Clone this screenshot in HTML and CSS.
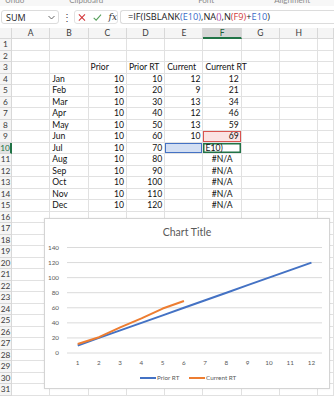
FILE: index.html
```html
<!DOCTYPE html>
<html lang="en">

<head>
    <meta charset="utf-8">
    <meta name="viewport" content="width=device-width, initial-scale=1.0">
    <title>Sheet1</title>
    <link rel="stylesheet" href="styles.css">
</head>

<body>

    <div class="ribbon">
        <span class="rb rb1">Undo</span>
        <span class="rb rb2">Clipboard</span>
        <span class="rb rb3">Font</span>
        <span class="rb rb4">Alignment</span>
    </div>

    <div class="fbar">
        <div class="namebox">
            <span>SUM</span>
            <svg class="chev" width="7" height="5" viewBox="0 0 7 5"><path d="M0.5 1 L3.5 4 L6.5 1" fill="none" stroke="#555" stroke-width="0.9"/></svg>
        </div>
        <div class="dots">⋮</div>
        <div class="btns">
            <svg width="9" height="9" viewBox="0 0 9 9"><path d="M1 1 L8 8 M8 1 L1 8" stroke="#d13438" stroke-width="1.2" fill="none"/></svg>
            <svg width="10" height="9" viewBox="0 0 10 9"><path d="M0.8 4.8 L3.6 7.6 L9.2 1.2" stroke="#55a05a" stroke-width="1.2" fill="none"/></svg>
            <span class="fx">fx</span>
        </div>
        <div class="formula">=IF(ISBLANK<span class="p1">(</span><span class="r1">E10</span><span class="p1">)</span>,NA<span class="p2">()</span>,N<span class="p3">(</span><span class="r2">F9</span><span class="p3">)</span>+<span class="r1">E10</span>)</div>
    </div>

    <div class="sheet"></div>

    <div class="chart">
        <svg width="286" height="171" viewBox="0 0 286 171">
            <rect x="0.5" y="0.5" width="285" height="170" fill="#fff" stroke="#d4d4d4"/>
            <text class="title" x="143" y="18" text-anchor="middle">Chart Title</text>
            <g class="grid"></g>
            <g class="labels"></g>
            <polyline class="prior" fill="none" stroke="#4472c4" stroke-width="2" stroke-linejoin="round" points=""/>
            <polyline class="current" fill="none" stroke="#ed7d31" stroke-width="2" stroke-linejoin="round" points=""/>
            <line x1="96" y1="160" x2="112" y2="160" stroke="#4472c4" stroke-width="2"/>
            <text class="lbl" x="113" y="162.3">Prior RT</text>
            <line x1="145" y1="160" x2="161" y2="160" stroke="#ed7d31" stroke-width="2"/>
            <text class="lbl" x="162" y="162.3">Current RT</text>
        </svg>
    </div>

    <script>
        let sheet = document.querySelector(".sheet");
        let cols = ["A", "B", "C", "D", "E", "F", "G", "H", ""];
        let months = ["Jan", "Feb", "Mar", "Apr", "May", "Jun", "Jul", "Aug", "Sep", "Oct", "Nov", "Dec"];
        let current = [12, 9, 13, 12, 13, 10];
        let currentRT = [12, 21, 34, 46, 59, 69];

        function cell(text, cls) {
            let c = document.createElement("div");
            c.className = "cell " + cls;
            c.textContent = text;
            sheet.appendChild(c);
        }

        // kolonne-overskrifter
        cell("", "corner");
        cols.forEach(c => cell(c, c == "F" ? "colhead sel" : "colhead"));

        for (let r = 1; r <= 31; r++) {
            cell(r, r == 10 ? "rowhead sel" : "rowhead");
            cols.forEach(c => {
                let text = "";
                let cls = "num";
                let i = r - 4;
                if (r == 3 && c == "C") { text = "Prior"; cls = "txt"; }
                if (r == 3 && c == "D") { text = "Prior RT"; cls = "txt"; }
                if (r == 3 && c == "E") { text = "Current"; cls = "txt"; }
                if (r == 3 && c == "F") { text = "Current RT"; cls = "txt"; }
                if (i >= 0 && i < 12) {
                    if (c == "B") { text = months[i]; cls = "txt"; }
                    if (c == "C") text = 10;
                    if (c == "D") text = (i + 1) * 10;
                    if (c == "E" && i < 6) text = current[i];
                    if (c == "F") {
                        if (i < 6) text = currentRT[i];
                        else if (i == 6) { text = "E10)"; cls = "txt"; }
                        else { text = "#N/A"; cls = "na"; }
                    }
                }
                if (r == 10 && c == "E") cls += " refblue";
                if (r == 9 && c == "F") cls += " refred";
                if (r == 10 && c == "F") cls += " active";
                cell(text, cls);
            });
        }

        // diagram
        let zero = 135;
        let scale = 105.5 / 140;
        let xpos = i => 33.7 + (i - 1) * 21.25;
        let ns = "http://www.w3.org/2000/svg";
        let grid = document.querySelector(".grid");
        let labels = document.querySelector(".labels");

        for (let v = 0; v <= 140; v += 20) {
            let y = zero - v * scale;
            let l = document.createElementNS(ns, "line");
            l.setAttribute("x1", 23);
            l.setAttribute("x2", 278);
            l.setAttribute("y1", y);
            l.setAttribute("y2", y);
            grid.appendChild(l);
            let t = document.createElementNS(ns, "text");
            t.setAttribute("x", 15);
            t.setAttribute("y", y + 2.2);
            t.setAttribute("text-anchor", "end");
            t.setAttribute("class", "lbl");
            t.textContent = v;
            labels.appendChild(t);
        }
        for (let i = 1; i <= 12; i++) {
            let t = document.createElementNS(ns, "text");
            t.setAttribute("x", xpos(i));
            t.setAttribute("y", 146.6);
            t.setAttribute("text-anchor", "middle");
            t.setAttribute("class", "lbl");
            t.textContent = i;
            labels.appendChild(t);
        }

        let prior = [];
        for (let i = 1; i <= 12; i++) prior.push(xpos(i) + "," + (zero - i * 10 * scale));
        document.querySelector(".prior").setAttribute("points", prior.join(" "));
        let cur = currentRT.map((v, i) => xpos(i + 1) + "," + (zero - v * scale));
        document.querySelector(".current").setAttribute("points", cur.join(" "));
    </script>

</body>

</html>
```

FILE: styles.css
```css
body {
    margin: 0;
    width: 334px;
    height: 397px;
    overflow: hidden;
    position: relative;
    background-color: #fff;
    font-family: 'Lato', 'Noto Sans', sans-serif;
}

/* rest af ribbon i toppen */
.ribbon {
    height: 6px;
    overflow: hidden;
    display: flex;
    font-size: 8px;
    line-height: 8px;
    color: #8a8a8a;
    background-color: #f7f7f7;
}

.rb {
    margin-top: -4px;
}

.rb1 {
    margin-left: 5px;
}

.rb2 {
    margin-left: 45px;
}

.rb3 {
    margin-left: 95px;
}

.rb4 {
    margin-left: 60px;
}

.fbar {
    display: flex;
    align-items: center;
    height: 16px;
    margin-top: 3px;
}

.namebox {
    display: flex;
    align-items: center;
    justify-content: space-between;
    width: 58px;
    height: 14px;
    margin-left: 1px;
    padding: 0 3px 0 4px;
    box-sizing: border-box;
    border: 1px solid #dcdcdc;
    border-radius: 3px;
    font-family: 'Open Sans', sans-serif;
    font-size: 9px;
    color: #222;
}

.dots {
    width: 15px;
    text-align: center;
    font-size: 10px;
    color: #444;
}

.btns {
    display: flex;
    align-items: center;
    gap: 7px;
    width: 44px;
    height: 14px;
    padding-left: 3px;
    box-sizing: border-box;
    border: 1px solid #e2e2e2;
    border-radius: 3px;
}

.fx {
    font-family: 'DejaVu Serif', serif;
    font-style: italic;
    font-size: 9px;
    color: #333;
}

.formula {
    flex: 1;
    height: 14px;
    margin-left: 2px;
    padding-left: 7px;
    box-sizing: border-box;
    border: 1px solid #dcdcdc;
    border-right: none;
    border-radius: 3px 0 0 3px;
    font-family: 'Open Sans', sans-serif;
    font-size: 9.2px;
    line-height: 12px;
    color: #222;
    white-space: nowrap;
}

.r1 {
    color: #3a6bc8;
}

.r2 {
    color: #d23c3c;
}

.p1 {
    color: #3a6bc8;
}

.p2 {
    color: #a0379a;
}

.p3 {
    color: #d23c3c;
}

/* regneark */
.sheet {
    display: grid;
    grid-template-columns: 12px repeat(8, 38.3px) 1fr;
    grid-template-rows: 11px;
    grid-auto-rows: 11.5px;
    margin-top: 3px;
    font-size: 8.6px;
}

.cell {
    position: relative;
    box-sizing: border-box;
    border-right: 1px solid #e1e1e1;
    border-bottom: 1px solid #e1e1e1;
    padding: 0 2px;
    line-height: 11px;
    white-space: nowrap;
    color: #111;
}

.corner,
.colhead,
.rowhead {
    background-color: #f5f5f5;
    color: #3a3a3a;
    border-color: #d8d8d8;
    text-align: center;
}

.colhead {
    font-size: 8.5px;
    line-height: 11px;
}

.rowhead {
    padding: 0;
    font-size: 8.3px;
}

.colhead.sel {
    background-color: #d6d6d6;
    border-bottom: 2px solid #217346;
    color: #1e5e3a;
}

.rowhead.sel {
    background-color: #e3e3e3;
    border-right: 2px solid #217346;
    color: #217346;
}

.num {
    text-align: right;
}

.txt {
    text-align: left;
}

.na {
    text-align: center;
}

.refblue {
    background-color: #d3dff3;
    box-shadow: inset 0 0 0 1px #4472c4;
}

.refred {
    background-color: #fbe3e3;
    box-shadow: inset 0 0 0 1px #d9534f;
}

.active {
    box-shadow: inset 0 0 0 1.5px #217346;
}

/* diagram */
.chart {
    position: absolute;
    left: 44px;
    top: 218px;
    width: 286px;
    height: 171px;
    box-shadow: 0 0 2px rgba(0, 0, 0, 0.08);
}

.chart svg {
    display: block;
}

.grid line {
    stroke: #dadada;
    stroke-width: 1;
}

.title {
    font-family: 'Lato', sans-serif;
    font-size: 10.5px;
    fill: #595959;
}

.lbl {
    font-family: 'Lato', sans-serif;
    font-size: 6.3px;
    fill: #595959;
}
```
